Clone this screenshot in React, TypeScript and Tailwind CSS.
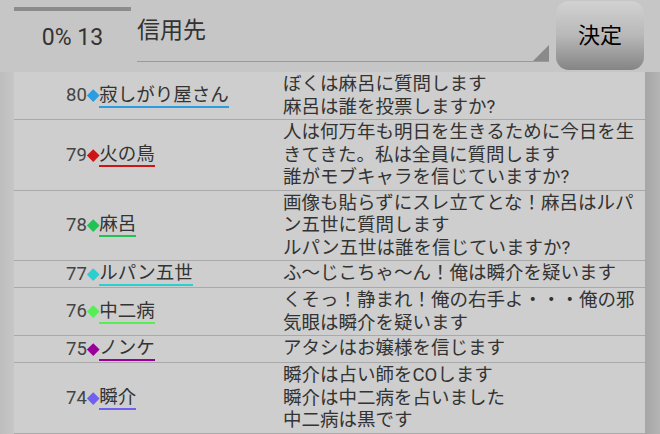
import React from 'react';

const rows = [
  { no: 80, name: "寂しがり屋さん", color: "#2a9de0", lines: ["ぼくは麻呂に質問します", "麻呂は誰を投票しますか?"] },
  { no: 79, name: "火の鳥", color: "#cc1515", lines: ["人は何万年も明日を生きるために今日を生", "きてきた。私は全員に質問します", "誰がモブキャラを信じていますか?"] },
  { no: 78, name: "麻呂", color: "#1fc253", lines: ["画像も貼らずにスレ立てとな！麻呂はルパ", "ン五世に質問します", "ルパン五世は誰を信じていますか?"] },
  { no: 77, name: "ルパン五世", color: "#2ccfcf", lines: ["ふ～じこちゃ～ん！俺は瞬介を疑います"] },
  { no: 76, name: "中二病", color: "#55ee55", lines: ["くそっ！静まれ！俺の右手よ・・・俺の邪", "気眼は瞬介を疑います"] },
  { no: 75, name: "ノンケ", color: "#990099", lines: ["アタシはお嬢様を信じます"] },
  { no: 74, name: "瞬介", color: "#7060f0", lines: ["瞬介は占い師をCOします", "瞬介は中二病を占いました", "中二病は黒です"] },
];

const font = { fontFamily: 'Roboto, "Noto Sans CJK JP", "Noto Sans", sans-serif' };

export default function App() {
  return (
    <div className="w-[660px] h-[434px] overflow-hidden bg-[#c6c6c6] text-[#333]" style={font}>
      {/* Header */}
      <div className="flex h-[72px]">
        <div className="w-[137px] pl-[14px] pt-[7px] flex flex-col">
          <div className="w-[117px] h-[4px] bg-[#8c8c8c]" />
          <div className="w-[117px] text-center text-[23px] leading-none mt-[15px] text-[#333]">0% 13</div>
        </div>
        <div className="w-[412px] h-[62px] border-b border-[#9a9a9a] relative">
          <div className="pt-[19px] text-[23px] leading-none text-[#333]">信用先</div>
          <div className="absolute right-0 bottom-0 w-0 h-0 border-l-[16px] border-l-transparent border-b-[16px] border-b-[#8a8a8a]" />
        </div>
        <div className="ml-[7px] mt-[1px] w-[88px] h-[69px] rounded-[13px] bg-gradient-to-b from-[#d2d2d2] via-[#b8b8b8] to-[#858585] flex items-center justify-center text-[22px] text-black">
          決定
        </div>
      </div>
      {/* List */}
      <div className="flex">
        <div className="w-[14px] h-[362px] bg-gradient-to-r from-[#bdbdbd] to-[#c6c6c6]" />
        <div className="w-[631px] bg-[#cecece]">
          {rows.map((r) => (
            <div key={r.no} className="flex border-b border-[#a9a9a9] py-[1px]">
              <div className="w-[268px] pl-[52px] flex items-center text-[18.5px] leading-[22.5px]">
                <span className="text-[#444]">{r.no}</span>
                <span className="inline-block w-[8.5px] h-[8.5px] rotate-45 mx-[2px]" style={{ backgroundColor: r.color }} />
                <span className="inline-block leading-[22px] border-b-2" style={{ borderColor: r.color }}>
                  {r.name}
                </span>
              </div>
              <div className="flex-1 pl-[1px] pr-[4px] text-[18.5px] leading-[22.5px]">
                {r.lines.map((l, i) => (
                  <div key={i} className="whitespace-nowrap">{l}</div>
                ))}
              </div>
            </div>
          ))}
        </div>
        <div className="w-[15px] h-[362px] bg-gradient-to-r from-[#a6a6a6] to-[#b4b4b4]" />
      </div>
    </div>
  );
}
